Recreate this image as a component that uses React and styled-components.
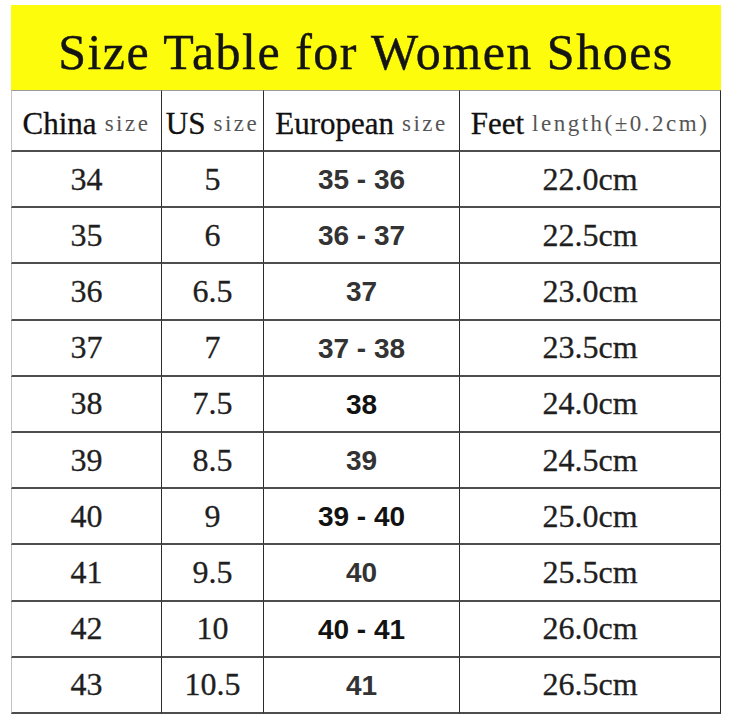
import React from 'react';
import styled, { createGlobalStyle } from 'styled-components';

const GlobalStyle = createGlobalStyle`
  html, body {
    margin: 0;
    padding: 0;
    background: #ffffff;
  }
  body {
    font-family: "Liberation Serif", "Times New Roman", serif;
    color: #1a1a1a;
  }
`;

const Page = styled.div`
  padding: 5px 0 0 11px;
`;

const Sheet = styled.div`
  width: 710px;
`;

const Banner = styled.div`
  height: 85px;
  box-sizing: border-box;
  padding-top: 8px;
  display: flex;
  align-items: center;
  justify-content: center;
  background-color: #fdfc0c;
`;

const Title = styled.h1`
  margin: 0;
  font-size: 50px;
  font-weight: 400;
  letter-spacing: 1.5px;
  color: #141414;
  white-space: nowrap;
  -webkit-text-stroke: 0.4px #141414;
`;

const Grid = styled.div`
  display: grid;
  grid-template-columns: 151px 102px 196px 261px;
  grid-template-rows: 62px repeat(10, 56.2px);
`;

const Cell = styled.div`
  display: flex;
  align-items: center;
  justify-content: center;
  box-sizing: border-box;
  border-bottom: 2px solid #4d4d4d;
  border-right: 1.5px solid #2b2b2b;
  border-left: ${props => (props.$first ? '1px solid #c4c4c4' : 'none')};
  white-space: nowrap;
  font-size: 32px;
  color: #1f1f1f;
  -webkit-text-stroke: 0.3px #1f1f1f;
`;

const HeadCell = styled(Cell)`
  border-top: 1px solid #9a9a9a;
  padding-top: 6px;
  -webkit-text-stroke: 0;
`;

const Big = styled.span`
  font-size: 31px;
  color: #111111;
  -webkit-text-stroke: 0.3px #111111;
`;

const Small = styled.span`
  font-size: 23px;
  letter-spacing: 2.5px;
  color: #555555;
  margin-left: 8px;
`;

const EuroCell = styled(Cell)`
  font-family: "Liberation Sans", Arial, sans-serif;
  font-weight: 700;
  font-size: 28px;
  padding-top: 2px;
  -webkit-text-stroke: 0;
  color: ${props => (props.$dark ? '#121212' : '#333333')};
`;

const rows = [
  ['34', '5', '35 - 36', '22.0cm', false],
  ['35', '6', '36 - 37', '22.5cm', false],
  ['36', '6.5', '37', '23.0cm', false],
  ['37', '7', '37 - 38', '23.5cm', false],
  ['38', '7.5', '38', '24.0cm', true],
  ['39', '8.5', '39', '24.5cm', false],
  ['40', '9', '39 - 40', '25.0cm', true],
  ['41', '9.5', '40', '25.5cm', false],
  ['42', '10', '40 - 41', '26.0cm', true],
  ['43', '10.5', '41', '26.5cm', false],
];

const App = () => (
  <Page>
    <GlobalStyle />
    <Sheet>
      <Banner>
        <Title>Size Table for Women Shoes</Title>
      </Banner>
      <Grid>
        <HeadCell $first>
          <Big>China</Big>
          <Small>size</Small>
        </HeadCell>
        <HeadCell>
          <Big>US</Big>
          <Small>size</Small>
        </HeadCell>
        <HeadCell>
          <Big>European</Big>
          <Small>size</Small>
        </HeadCell>
        <HeadCell>
          <Big>Feet</Big>
          <Small>length(±0.2cm)</Small>
        </HeadCell>
        {rows.map(([china, us, euro, feet, dark]) => (
          <React.Fragment key={china}>
            <Cell $first>{china}</Cell>
            <Cell>{us}</Cell>
            <EuroCell $dark={dark}>{euro}</EuroCell>
            <Cell>{feet}</Cell>
          </React.Fragment>
        ))}
      </Grid>
    </Sheet>
  </Page>
);

export default App;
